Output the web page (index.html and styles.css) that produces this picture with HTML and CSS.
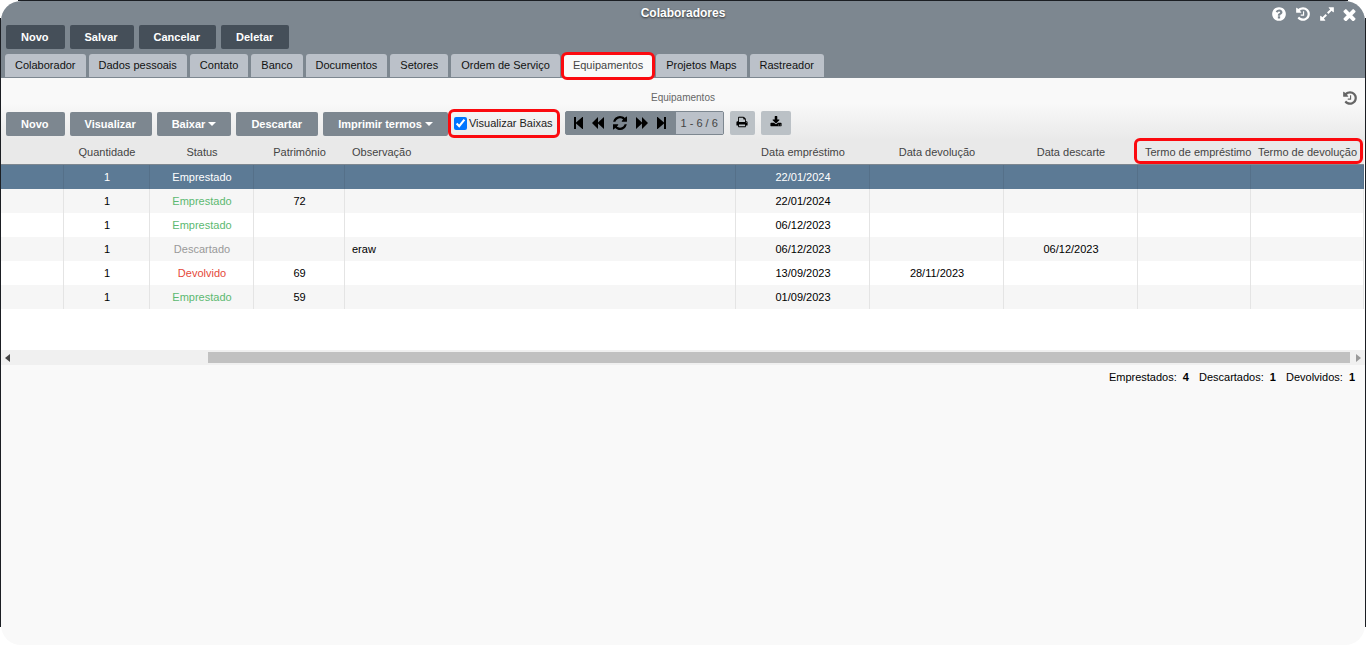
FILE: index.html
```html
<!DOCTYPE html>
<html lang="pt-BR">
<head>
<meta charset="utf-8">
<title>Colaboradores</title>
<link rel="stylesheet" href="styles.css">
</head>
<body>
<svg class="defs" aria-hidden="true">
  <symbol id="i-help" viewBox="0 0 1792 1792"><path d="M1024 1376v-192q0-14-9-23t-23-9h-192q-14 0-23 9t-9 23v192q0 14 9 23t23 9h192q14 0 23-9t9-23zm256-672q0-88-55.500-163t-138.500-116-170-41q-243 0-371 213-15 24 8 42l132 100q7 6 19 6 16 0 25-12 53-68 86-92 34-24 86-24 48 0 85.500 26t37.500 59q0 38-20 61t-68 45q-63 28-115.500 86.500t-52.500 125.500v36q0 14 9 23t23 9h192q14 0 23-9t9-23q0-19 21.500-49.500t54.500-49.500q32-18 49-28.500t46-35 44.500-48 28-60.500 12.500-81zm384 192q0 209-103 385.500t-279.500 279.500-385.500 103-385.500-103-279.500-279.500-103-385.500 103-385.500 279.500-279.500 385.500-103 385.500 103 279.500 279.500 103 385.500z"/></symbol>
  <symbol id="i-history" viewBox="0 0 1792 1792"><path d="M1664 896q0 156-61 298t-164 245-245 164-298 61q-172 0-327-72.500t-264-204.500q-7-10-6.500-22.500t8.500-20.500l137-138q10-9 25-9 16 2 23 12 73 95 179 147t225 52q104 0 198.500-40.500t163.500-109.500 109.500-163.500 40.500-198.500-40.500-198.500-109.500-163.500-163.500-109.500-198.500-40.500q-98 0-188 35.500t-160 101.500l137 138q31 30 14 69-17 40-59 40h-448q-26 0-45-19t-19-45v-448q0-42 40-59 39-17 69 14l130 129q107-101 244.500-156.500t284.500-55.500q156 0 298 61t245 164 164 245 61 298zm-640-288v448q0 14-9 23t-23 9h-320q-14 0-23-9t-9-23v-64q0-14 9-23t23-9h224v-352q0-14 9-23t23-9h64q14 0 23 9t9 23z"/></symbol>
  <symbol id="i-expand" viewBox="0 0 1792 1792"><path d="M883 1056q0 13-10 23l-332 332 144 144q19 19 19 45t-19 45-45 19h-448q-26 0-45-19t-19-45v-448q0-26 19-45t45-19 45 19l144 144 332-332q10-10 23-10t23 10l114 114q10 10 10 23zm781-864v448q0 26-19 45t-45 19-45-19l-144-144-332 332q-10 10-23 10t-23-10l-114-114q-10-10-10-23t10-23l332-332-144-144q-19-19-19-45t19-45 45-19h448q26 0 45 19t19 45z"/></symbol>
  <symbol id="i-close" viewBox="256 256 1280 1280"><path d="M1490 1322q0 40-28 68l-136 136q-28 28-68 28t-68-28l-294-294-294 294q-28 28-68 28t-68-28l-136-136q-28-28-28-68t28-68l294-294-294-294q-28-28-28-68t28-68l136-136q28-28 68-28t68 28l294 294 294-294q28-28 68-28t68 28l136 136q28 28 28 68t-28 68l-294 294 294 294q28 28 28 68z"/></symbol>
  <symbol id="i-refresh" viewBox="128 128 1536 1536"><path d="M1639 1056q0 5-1 7-64 268-268 434.500t-478 166.500q-146 0-282.500-55t-243.500-157l-129 129q-19 19-45 19t-45-19-19-45v-448q0-26 19-45t45-19h448q26 0 45 19t19 45-19 45l-137 137q71 66 161 102t187 36q134 0 250-65t186-179q11-17 53-117 8-23 30-23h192q13 0 22.500 9.500t9.500 22.500zm25-800v448q0 26-19 45t-45 19h-448q-26 0-45-19t-19-45 19-45l138-138q-148-137-349-137-134 0-250 65t-186 179q-11 17-53 117-8 23-30 23h-199q-13 0-22.500-9.500t-9.500-22.500v-7q65-268 270-434.500t480-166.500q146 0 284 55.500t245 156.500l130-129q19-19 45-19t45 19 19 45z"/></symbol>
  <symbol id="i-print" viewBox="0 0 1792 1792"><path d="M448 1536h896v-256h-896v256zm0-640h896v-384h-160q-40 0-68-28t-28-68v-160h-640v640zm1152 64q0-26-19-45t-45-19-45 19-19 45 19 45 45 19 45-19 19-45zm128 0v416q0 13-9.500 22.500t-22.500 9.500h-224v160q0 40-28 68t-68 28h-960q-40 0-68-28t-28-68v-160h-224q-13 0-22.500-9.500t-9.500-22.500v-416q0-79 56.500-135.500t135.500-56.500h64v-544q0-40 28-68t68-28h672q40 0 88 20t76 48l152 152q28 28 48 76t20 88v256h64q79 0 135.500 56.500t56.500 135.500z"/></symbol>
  <symbol id="i-download" viewBox="0 0 1792 1792"><path d="M1344 1344q0-26-19-45t-45-19-45 19-19 45 19 45 45 19 45-19 19-45zm256 0q0-26-19-45t-45-19-45 19-19 45 19 45 45 19 45-19 19-45zm128-224v320q0 40-28 68t-68 28h-1472q-40 0-68-28t-28-68v-320q0-40 28-68t68-28h465l135 136q58 56 136 56t136-56l136-136h464q40 0 68 28t28 68zm-325-569q17 41-14 70l-448 448q-18 19-45 19t-45-19l-448-448q-31-29-14-70 17-39 59-39h256v-448q0-26 19-45t45-19h256q26 0 45 19t19 45v448h256q42 0 59 39z"/></symbol>
  <symbol id="i-first" viewBox="0 0 9 12"><path d="M0 0h2v5.400L8.400 0H9v12h-.6L2 6.600V12H0z"/></symbol>
  <symbol id="i-prev" viewBox="0 0 12 12"><path d="M0 6L6 0v5.500L12 0v12L6 6.500V12z"/></symbol>
  <symbol id="i-next" viewBox="0 0 12 12"><path d="M12 6L6 0v5.500L0 0v12l6-5.500V12z"/></symbol>
  <symbol id="i-last" viewBox="0 0 9 12"><path d="M9 0H7v5.400L.6 0H0v12h.6L7 6.600V12h2z"/></symbol>
</svg>

<div class="frame">
<main class="window">
  <header class="head">
    <div class="titlebar">
      <h1 class="title">Colaboradores</h1>
      <div class="window-tools">
        <button class="icon-btn" aria-label="Ajuda"><svg class="icon-16"><use href="#i-help"/></svg></button>
        <button class="icon-btn" aria-label="Histórico"><svg class="icon-16"><use href="#i-history"/></svg></button>
        <button class="icon-btn" aria-label="Expandir"><svg class="icon-16"><use href="#i-expand"/></svg></button>
        <button class="icon-btn" aria-label="Fechar"><svg class="icon-13"><use href="#i-close"/></svg></button>
      </div>
    </div>
    <div class="actions">
      <button class="btn btn-dark">Novo</button>
      <button class="btn btn-dark">Salvar</button>
      <button class="btn btn-dark">Cancelar</button>
      <button class="btn btn-dark">Deletar</button>
    </div>
    <nav class="tabs">
      <a class="tab" href="#">Colaborador</a>
      <a class="tab" href="#">Dados pessoais</a>
      <a class="tab" href="#">Contato</a>
      <a class="tab" href="#">Banco</a>
      <a class="tab" href="#">Documentos</a>
      <a class="tab" href="#">Setores</a>
      <a class="tab" href="#">Ordem de Serviço</a>
      <a class="tab tab-active" href="#">Equipamentos</a>
      <a class="tab" href="#">Projetos Maps</a>
      <a class="tab" href="#">Rastreador</a>
    </nav>
  </header>

  <section class="panel">
    <div class="panel-title">
      <h2 class="subtitle">Equipamentos</h2>
      <button class="icon-btn icon-btn-muted" aria-label="Histórico de equipamentos"><svg class="icon-16"><use href="#i-history"/></svg></button>
    </div>
    <div class="toolbar">
      <button class="btn">Novo</button>
      <button class="btn">Visualizar</button>
      <button class="btn btn-menu">Baixar <span class="caret"></span></button>
      <button class="btn">Descartar</button>
      <button class="btn btn-menu">Imprimir termos <span class="caret"></span></button>
      <label class="check" for="baixas"><input class="check-box" type="checkbox" id="baixas" checked>Visualizar Baixas</label>
      <div class="pager">
        <div class="pager-buttons">
          <button class="pager-btn" aria-label="Primeira"><svg class="icon-end"><use href="#i-first"/></svg></button>
          <button class="pager-btn" aria-label="Anterior"><svg class="icon-step"><use href="#i-prev"/></svg></button>
          <button class="pager-btn" aria-label="Atualizar"><svg class="icon-refresh"><use href="#i-refresh"/></svg></button>
          <button class="pager-btn" aria-label="Próxima"><svg class="icon-step"><use href="#i-next"/></svg></button>
          <button class="pager-btn" aria-label="Última"><svg class="icon-end"><use href="#i-last"/></svg></button>
        </div>
        <span class="pager-count">1 - 6 / 6</span>
      </div>
      <button class="tool tool-print" aria-label="Imprimir"><svg class="icon-12"><use href="#i-print"/></svg></button>
      <button class="tool tool-download" aria-label="Baixar arquivo"><svg class="icon-12"><use href="#i-download"/></svg></button>
    </div>
  </section>

  <div class="grid-area">
    <table class="grid">
      <colgroup>
        <col class="c-lead"><col class="c-qty"><col class="c-status"><col class="c-asset"><col>
        <col class="c-date"><col class="c-date"><col class="c-date"><col class="c-term"><col class="c-term">
      </colgroup>
      <thead>
        <tr>
          <th></th><th>Quantidade</th><th>Status</th><th>Patrimônio</th><th class="left">Observação</th>
          <th>Data empréstimo</th><th>Data devolução</th><th>Data descarte</th>
          <th class="left marked">Termo de empréstimo</th><th class="left">Termo de devolução</th>
        </tr>
      </thead>
      <tbody>
        <tr class="selected"><td></td><td>1</td><td>Emprestado</td><td></td><td></td><td>22/01/2024</td><td></td><td></td><td></td><td></td></tr>
        <tr><td></td><td>1</td><td class="lent">Emprestado</td><td>72</td><td></td><td>22/01/2024</td><td></td><td></td><td></td><td></td></tr>
        <tr><td></td><td>1</td><td class="lent">Emprestado</td><td></td><td></td><td>06/12/2023</td><td></td><td></td><td></td><td></td></tr>
        <tr><td></td><td>1</td><td class="discarded">Descartado</td><td></td><td class="left">eraw</td><td>06/12/2023</td><td></td><td>06/12/2023</td><td></td><td></td></tr>
        <tr><td></td><td>1</td><td class="returned">Devolvido</td><td>69</td><td></td><td>13/09/2023</td><td>28/11/2023</td><td></td><td></td><td></td></tr>
        <tr><td></td><td>1</td><td class="lent">Emprestado</td><td>59</td><td></td><td>01/09/2023</td><td></td><td></td><td></td><td></td></tr>
      </tbody>
    </table>
  </div>
  <div class="scrollbar" aria-hidden="true">
    <span class="arrow arrow-left"></span>
    <span class="track"><span class="thumb"></span></span>
    <span class="arrow arrow-right"></span>
  </div>
  <footer class="totals">
    <span class="total">Emprestados: <b class="total-value">4</b></span>
    <span class="total">Descartados: <b class="total-value">1</b></span>
    <span class="total">Devolvidos: <b class="total-value">1</b></span>
  </footer>
</main>
</div>
</body>
</html>
```
FILE: styles.css
```css
* { box-sizing: border-box; }

body {
  margin: 0;
  background: #fff;
  color: #000;
  font: 11px/14px "Liberation Sans", Arial, sans-serif;
}

button { font: inherit; border: 0; cursor: pointer; }
svg { display: block; fill: currentColor; }
.defs { display: none; }

/* Thin dark edges that stop short of the rounded corners */
.frame {
  display: flex;
  min-height: 100vh;
  padding: 1px 1px 0;
  background:
    linear-gradient(#1b1e23, #1b1e23) center top / calc(100% - 36px) 1px no-repeat,
    linear-gradient(#1b1e23, #1b1e23) left center / 1px calc(100% - 36px) no-repeat,
    linear-gradient(#1b1e23, #1b1e23) right center / 1px calc(100% - 36px) no-repeat;
}

.window {
  flex: 1;
  min-width: 0;
  border-radius: 20px;
  overflow: hidden;
  background: #f9f9f9;
}

/* Window head */
.head { background: #7d8790; }

.titlebar {
  display: grid;
  grid-template-columns: 1fr auto 1fr;
  align-items: center;
  height: 24px;
}

.title {
  grid-column: 2;
  margin: 0;
  color: #fff;
  font-size: 12px;
  text-shadow: 0 1px 2px #333;
}

.window-tools {
  display: flex;
  align-items: center;
  justify-content: flex-end;
  gap: 8px;
  padding: 2px 9px 0 0;
}

.icon-btn { padding: 0; background: none; color: #fff; }
.icon-btn-muted { color: #666; }
.icon-16 { width: 16px; height: 16px; }
.icon-13 { width: 13px; height: 13px; }
.icon-12 { width: 12px; height: 12px; }

.actions { display: flex; gap: 5px; padding: 0 5px; }

.btn {
  height: 24px;
  padding: 0 16px 0 15px;
  border-radius: 2px;
  background: #7d8790;
  color: #fff;
  font-weight: bold;
  white-space: nowrap;
}

.btn-dark { background: #454f59; }
.btn-menu { padding: 0 15px; }

.caret {
  display: inline-block;
  border: 4px solid transparent;
  border-top-color: #fff;
  border-bottom: 0;
  vertical-align: 2px;
}

.tabs { display: flex; gap: 3px; padding: 5px 4px 0; }

.tab {
  height: 23px;
  margin-bottom: 1px;
  padding: 0 10px;
  border-radius: 3px 3px 0 0;
  background: #bbc1c9;
  color: #111;
  line-height: 23px;
  text-decoration: none;
  white-space: nowrap;
}

.tab-active {
  position: relative;
  height: 24px;
  margin-bottom: 0;
  background: #f9f9f9;
  color: #444;
}

/* Red attention rings */
.tab-active::after,
.check::after,
.marked::after {
  content: "";
  position: absolute;
  z-index: 1;
  inset: -2px;
  border: 3px solid #fb0a0f;
  border-radius: 6px;
  pointer-events: none;
}

/* Panel */
.panel { background: linear-gradient(#f9f9f9 40%, #e9e9e9); }

.panel-title {
  display: grid;
  grid-template-columns: 1fr auto 1fr;
  align-items: center;
  padding: 12px 7px 5px;
}

.subtitle {
  grid-column: 2;
  margin: 0;
  color: #666;
  font-size: 10px;
  font-weight: normal;
}

.icon-btn-muted { justify-self: end; }

.toolbar {
  display: flex;
  align-items: center;
  gap: 5px;
  padding: 0 5px 3px;
}

.check {
  position: relative;
  display: flex;
  align-items: center;
  gap: 2px;
  height: 24px;
  margin-bottom: 2px;
  padding: 0 5px 0 1px;
  color: #222;
  white-space: nowrap;
}

.check::after { inset: -2px -2px -3px -5px; }
.check-box { width: 13px; height: 13px; margin: 0; }

.pager {
  display: flex;
  height: 24px;
  margin: 0 1px 2px 2px;
  border: 1px solid #7d8790;
  border-radius: 2px;
  background: #7d8790;
}

.pager-buttons { display: flex; align-items: center; gap: 9px; padding: 0 10px 0 8px; }
.pager-btn { padding: 0; background: none; color: #000; }
.icon-end { width: 9px; height: 12px; }
.icon-step { width: 12px; height: 12px; }
.icon-refresh { width: 14px; height: 14px; }

.pager-count {
  padding: 0 5px;
  background: #bbc1c9;
  color: #444;
  line-height: 22px;
  white-space: nowrap;
}

.tool {
  height: 24px;
  margin-bottom: 2px;
  padding: 0 9px 3px;
  border-radius: 2px;
  background: #bbc1c6;
  color: #000;
}

.tool-print { padding: 0 7px 3px 6px; }
.tool-download { margin-left: 1px; }

/* Data grid */
.grid-area { min-height: 210px; padding-right: 1px; background: #fff; }

.grid {
  width: 100%;
  table-layout: fixed;
  border-collapse: separate;
  border-spacing: 0;
}

.c-lead { width: 63px; }
.c-qty { width: 86px; }
.c-status { width: 104px; }
.c-asset { width: 91px; }
.c-date { width: 134px; }
.c-term { width: 113px; }

.grid th {
  height: 25px;
  padding: 0;
  border-bottom: 1px solid #7d8790;
  background: #e9e9e9;
  color: #444;
  font-weight: normal;
  white-space: nowrap;
}

.grid td {
  height: 24px;
  padding: 0 0 0 1px;
  border-right: 1px solid #e4e4e4;
  text-align: center;
}

.grid .left { padding-left: 7px; text-align: left; }
.grid .marked { position: relative; }
.marked::after { inset: -2px -112px 0 -4px; }

.grid tbody tr:nth-child(even) { background: #f6f6f6; }
.grid .selected { background: #5c7a95; color: #fff; }
.grid .selected td { border-right-color: #557089; }
.lent { color: #5cb971; }
.discarded { color: #999; }
.returned { color: #e5493a; }

/* Horizontal scrollbar */
.scrollbar {
  display: flex;
  align-items: center;
  justify-content: space-between;
  height: 15px;
  padding: 0 4px;
  background: #f0f0f0;
}

.arrow { border: 4px solid transparent; }
.arrow-left { border-left: 0; border-right: 5px solid #444; }
.arrow-right { border-right: 0; border-left: 5px solid #999; }
.track { display: flex; flex: 1; justify-content: flex-end; padding: 0 6px 0 198px; }
.thumb { flex: 1; height: 11px; background: #c1c1c1; }

/* Totals */
.totals {
  display: flex;
  justify-content: flex-end;
  gap: 10px;
  padding: 5px 10px;
}

.total-value { margin-left: 3px; }
```
